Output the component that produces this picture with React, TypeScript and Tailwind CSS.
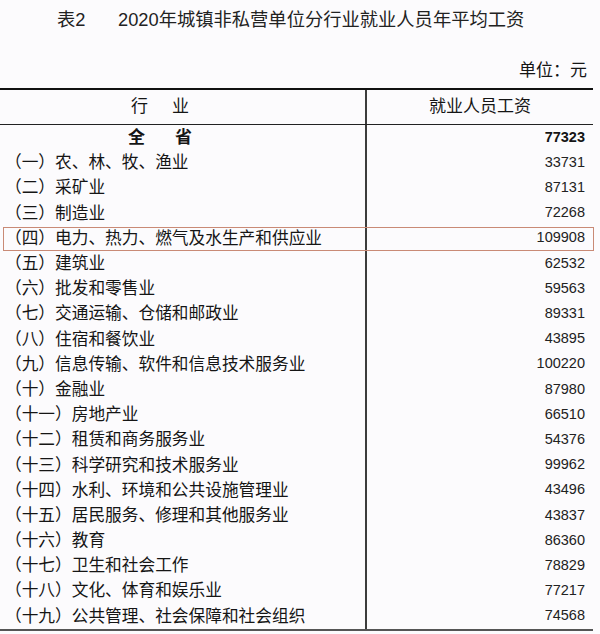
const rows: [string, string][] = [
  ["（一）农、林、牧、渔业", "33731"],
  ["（二）采矿业", "87131"],
  ["（三）制造业", "72268"],
  ["（四）电力、热力、燃气及水生产和供应业", "109908"],
  ["（五）建筑业", "62532"],
  ["（六）批发和零售业", "59563"],
  ["（七）交通运输、仓储和邮政业", "89331"],
  ["（八）住宿和餐饮业", "43895"],
  ["（九）信息传输、软件和信息技术服务业", "100220"],
  ["（十）金融业", "87980"],
  ["（十一）房地产业", "66510"],
  ["（十二）租赁和商务服务业", "54376"],
  ["（十三）科学研究和技术服务业", "99962"],
  ["（十四）水利、环境和公共设施管理业", "43496"],
  ["（十五）居民服务、修理和其他服务业", "43837"],
  ["（十六）教育", "86360"],
  ["（十七）卫生和社会工作", "78829"],
  ["（十八）文化、体育和娱乐业", "77217"],
  ["（十九）公共管理、社会保障和社会组织", "74568"],
];

const font = "font-['Liberation_Sans','Noto_Sans_CJK_SC',sans-serif]";

export default function App() {
  return (
    <div className={`w-[600px] h-[634px] overflow-hidden bg-[#fcfbfd] text-[#151515] ${font}`}>
      {/* title */}
      <div className="h-[40px] flex items-center text-[18.3px] text-[#222]">
        <span className="pl-[57px] w-[118px]">表2</span>
        <span>2020年城镇非私营单位分行业就业人员年平均工资</span>
      </div>

      <div className="h-[48px] pt-[20px] leading-[22px] text-right pr-[13px] text-[17px]">单位：元</div>

      {/* table */}
      <div className="w-[593px] border-t-2 border-[#111]">
        <div className="h-[35px] grid grid-cols-[367px_1fr] border-b border-[#222] text-[17px]">
          <div className="border-r-2 border-[#3c3c3c] flex items-center">
            <div className="w-[320px] flex justify-center gap-[24px]">
              <span>行</span>
              <span>业</span>
            </div>
          </div>
          <div className="flex items-center justify-center">就业人员工资</div>
        </div>

        <div className="border-b-2 border-[#555]">
          <div className="h-[25.2px] grid grid-cols-[367px_1fr]">
            <div className="border-r-2 border-[#3c3c3c] flex items-center">
              <div className="w-[320px] flex justify-center gap-[30px] text-[17px] font-bold">
                <span>全</span>
                <span>省</span>
              </div>
            </div>
            <div className="flex items-center justify-end pr-[8px] text-[14.5px] font-bold">77323</div>
          </div>
          {rows.map(([name, value], i) => (
            <div key={i} className="relative h-[25.2px] grid grid-cols-[367px_1fr]">
              <div className="border-r-2 border-[#3c3c3c] flex items-center pl-[5px] text-[16.7px] whitespace-nowrap">
                {name}
              </div>
              <div className="flex items-center justify-end pr-[8px] text-[14.5px] text-[#222]">{value}</div>
              {i === 3 && (
                <span className="pointer-events-none absolute left-[3px] -right-[1px] top-[1px] bottom-0 border-[1.5px] border-[#c98a76]" />
              )}
            </div>
          ))}
        </div>
      </div>
    </div>
  );
}
